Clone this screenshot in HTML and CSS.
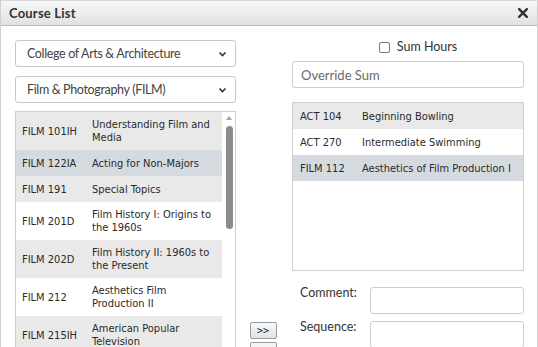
FILE: index.html
```html
<!DOCTYPE html>
<html>
<head>
<meta charset="utf-8">
<link rel="stylesheet" href="styles.css">
</head>
<body>
<div class="dialog">
  <div class="titlebar">
    <span class="title">Course List</span>
    <svg class="close" width="10" height="10" viewBox="0 0 10 10"><path d="M1.2 1.2 L8.8 8.8 M8.8 1.2 L1.2 8.8" stroke="#333" stroke-width="2.4" stroke-linecap="square"/></svg>
  </div>
  <div class="content">
    <div class="left">
      <div class="select"><span>College of Arts &amp; Architecture</span><svg width="9" height="6" viewBox="0 0 9 6"><path d="M1.5 1.5 L4.5 4.5 L7.5 1.5" fill="none" stroke="#333" stroke-width="1.6"/></svg></div>
      <div class="select"><span>Film &amp; Photography (FILM)</span><svg width="9" height="6" viewBox="0 0 9 6"><path d="M1.5 1.5 L4.5 4.5 L7.5 1.5" fill="none" stroke="#333" stroke-width="1.6"/></svg></div>
      <div class="list">
        <div class="rows">
          <div class="row alt"><span class="code">FILM 101IH</span><span class="desc">Understanding Film and Media</span></div>
          <div class="row sel"><span class="code">FILM 122IA</span><span class="desc">Acting for Non-Majors</span></div>
          <div class="row alt"><span class="code">FILM 191</span><span class="desc">Special Topics</span></div>
          <div class="row"><span class="code">FILM 201D</span><span class="desc">Film History I: Origins to the 1960s</span></div>
          <div class="row alt"><span class="code">FILM 202D</span><span class="desc">Film History II: 1960s to the Present</span></div>
          <div class="row"><span class="code">FILM 212</span><span class="desc">Aesthetics Film Production II</span></div>
          <div class="row alt"><span class="code">FILM 215IH</span><span class="desc">American Popular Television</span></div>
        </div>
        <div class="scrollbar">
          <svg class="arrow" width="6" height="4" viewBox="0 0 6 4"><path d="M0 4 L3 0 L6 4 Z" fill="#a3a3a3"/></svg>
          <div class="thumb"></div>
        </div>
      </div>
    </div>
    <div class="middle">
      <button class="btn">&gt;&gt;</button>
      <button class="btn"></button>
    </div>
    <div class="right">
      <label class="check"><span class="box"></span>Sum Hours</label>
      <div class="input placeholder">Override Sum</div>
      <div class="rlist">
        <div class="rrow alt"><span class="rcode">ACT 104</span><span>Beginning Bowling</span></div>
        <div class="rrow"><span class="rcode">ACT 270</span><span>Intermediate Swimming</span></div>
        <div class="rrow sel"><span class="rcode">FILM 112</span><span>Aesthetics of Film Production I</span></div>
      </div>
      <div class="field"><span class="label">Comment:</span><div class="input small"></div></div>
      <div class="field"><span class="label">Sequence:</span><div class="input small"></div></div>
    </div>
  </div>
</div>
</body>
</html>
```
FILE: styles.css
```css
html, body {
  margin: 0;
  padding: 0;
  background: #fff;
  overflow: hidden;
}
.dialog {
  width: 538px;
  height: 347px;
  box-sizing: border-box;
  border-top: 1px solid #d8d8d8;
  border-left: 1px solid #d0d0d0;
  border-right: 1px solid #d0d0d0;
  overflow: hidden;
  font-family: Lato, "Liberation Sans", sans-serif;
}
.titlebar {
  height: 25px;
  box-sizing: border-box;
  background: linear-gradient(#f7f7f7, #e1e1e1);
  border-bottom: 1px solid #b9b9b9;
  display: flex;
  align-items: center;
  justify-content: space-between;
  padding: 0 9px 0 8px;
}
.title {
  font-size: 13px;
  font-weight: 700;
  color: #333;
  letter-spacing: 0.2px;
}
.content {
  display: grid;
  grid-template-columns: 221px 56px 232px;
  padding: 0 13px 0 14px;
}
.left {
  display: flex;
  flex-direction: column;
  padding-top: 14px;
}
.select {
  height: 27px;
  box-sizing: border-box;
  border: 1px solid #c8c8c8;
  border-radius: 3px;
  display: flex;
  align-items: center;
  justify-content: space-between;
  padding: 0 8px 0 11px;
  font-size: 12.5px;
  letter-spacing: -0.35px;
  color: #444;
  margin-bottom: 9px;
}
.list {
  margin-top: -1px;
  border: 1px solid #cfcfcf;
  display: flex;
  height: 260px;
  overflow: hidden;
}
.rows {
  flex: 1;
  font-family: "DejaVu Sans Condensed", "DejaVu Sans", sans-serif;
  font-size: 11px;
  color: #2a2a2a;
}
.row {
  display: flex;
  align-items: center;
  min-height: 26px;
  box-sizing: border-box;
  padding: 6px 0;
  line-height: 13px;
}
.row.alt { background: #e9e9e9; }
.row.sel { background: #d5dae0; }
.code {
  width: 76px;
  flex: none;
  box-sizing: border-box;
  padding-left: 6px;
}
.desc {
  flex: 1;
  padding-right: 6px;
}
.scrollbar {
  width: 13px;
  flex: none;
  display: flex;
  flex-direction: column;
  align-items: center;
  padding-top: 4px;
  box-sizing: border-box;
}
.arrow { display: block; margin-left: 1px; }
.thumb {
  margin-top: 6px;
  width: 7px;
  height: 103px;
  border-radius: 4px;
  background: #8c8c8c;
  margin-left: 1px;
}
.middle {
  display: flex;
  flex-direction: column;
  align-items: center;
  padding-top: 296px;
  gap: 3px;
}
.btn {
  width: 27px;
  height: 17px;
  padding: 0;
  border: 1px solid #9a9a9a;
  border-radius: 2px;
  background: linear-gradient(#f8f8f8, #e3e3e3);
  font-family: "DejaVu Sans Mono", monospace;
  font-size: 10px;
  color: #222;
  line-height: 14px;
  margin-left: -2px;
}
.right {
  display: flex;
  flex-direction: column;
}
.check {
  display: flex;
  align-items: center;
  justify-content: center;
  height: 20px;
  margin-top: 10px;
  font-size: 12.5px;
  color: #333;
  padding-left: 20px;
}
.box {
  width: 9px;
  height: 9px;
  border: 1px solid #767676;
  border-radius: 2px;
  margin-right: 7px;
  margin-top: 2px;
}
.input {
  height: 27px;
  box-sizing: border-box;
  border: 1px solid #cdcdcd;
  border-radius: 3px;
  background: #fff;
}
.placeholder {
  margin-top: 5px;
  display: flex;
  align-items: center;
  padding-left: 8px;
  font-size: 13px;
  color: #6a6a6a;
}
.rlist {
  margin-top: 14px;
  height: 169px;
  box-sizing: border-box;
  border: 1px solid #cfcfcf;
  font-family: "DejaVu Sans Condensed", "DejaVu Sans", sans-serif;
  font-size: 11px;
  color: #2a2a2a;
}
.rrow {
  height: 26px;
  display: flex;
  align-items: center;
}
.rrow.alt { background: #e9e9e9; }
.rrow.sel { background: #d5dae0; }
.rcode {
  width: 69px;
  flex: none;
  box-sizing: border-box;
  padding-left: 7px;
}
.field {
  display: flex;
  align-items: flex-start;
  justify-content: space-between;
  margin-top: 16px;
  padding-left: 8px;
}
.field + .field { margin-top: 7px; }
.label {
  font-size: 12.5px;
  color: #333;
  line-height: 14px;
  margin-top: -1px;
}
.input.small { width: 154px; }
```
